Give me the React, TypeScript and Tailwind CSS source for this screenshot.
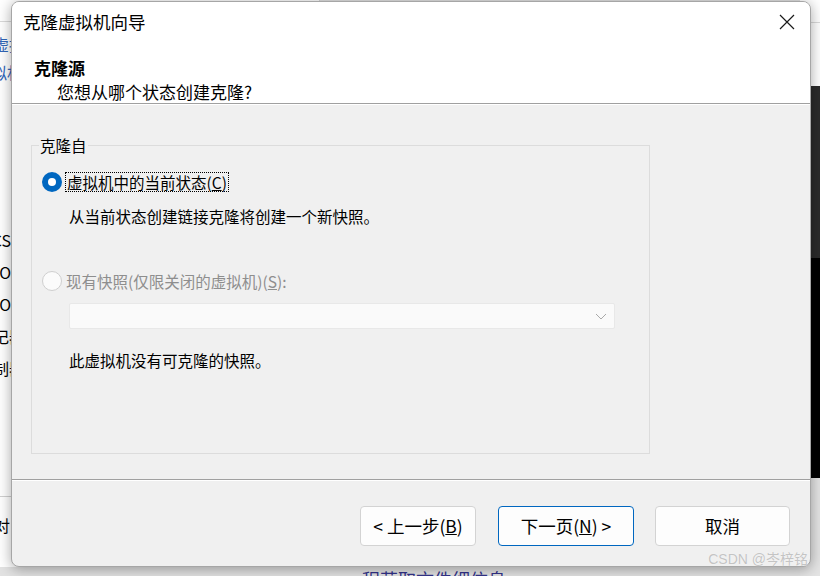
import React from 'react';

// Radio button in the Windows 11 style
function Radio({ checked, disabled }: { checked?: boolean; disabled?: boolean }) {
  if (checked) {
    return (
      <span className="w-[20px] h-[20px] rounded-full bg-[#0067c0] flex items-center justify-center shrink-0">
        <span className="w-[8px] h-[8px] rounded-full bg-white" />
      </span>
    );
  }
  return (
    <span
      className={`w-[20px] h-[20px] rounded-full border shrink-0 ${
        disabled ? 'border-[#cfcfcf] bg-[#fbfbfb]' : 'border-[#8a8a8a] bg-white'
      }`}
    />
  );
}

function DialogButton({ children, primary }: { children: React.ReactNode; primary?: boolean }) {
  return (
    <button
      className={`w-full h-[40px] rounded-[4px] bg-[#fdfdfd] text-[17.5px] leading-[22px] text-black flex items-center justify-center ${
        primary ? 'border border-[#0067c0]' : 'border border-[#d3d3d3]'
      }`}
    >
      {children}
    </button>
  );
}

export default function App() {
  return (
    <div className="relative w-[820px] h-[576px] overflow-hidden bg-[#e2e2e2] font-['Noto_Sans_CJK_SC',sans-serif]">
      {/* windows behind the dialog */}
      <div className="absolute left-0 top-0 w-[320px] h-[567px] bg-white border-r border-[#d6d6d6]">
        <div className="h-[22px] border-b border-[#dadada]" />
        <div className="ml-[-7px] mt-[12px] text-[16px] leading-[20px] text-[#3166b8]">虚拟</div>
        <div className="ml-[-9px] mt-[8px] text-[16px] leading-[20px] text-[#3166b8]">拟机</div>
        <div className="ml-[-39px] w-[50px] mt-[142px] flex flex-col items-end text-[16px] leading-[32px] text-black">
          <span>VCS</span>
          <span>IO</span>
          <span>IO</span>
          <span className="mr-[-14px]">登记器</span>
          <span className="mr-[-14px]">复制器</span>
        </div>
        <div className="mt-[112px] border-t border-[#d0d0d0]" />
        <div className="ml-[-6px] mt-[18px] text-[16px] leading-[20px] text-black">对</div>
      </div>
      <div className="absolute left-[362px] top-[568px] text-[18px] leading-[22px] text-[#33338a]">
        程获取文件细信息
      </div>
      <div className="absolute right-0 top-0 w-[20px] h-[576px] flex flex-col">
        <div className="h-[86px] bg-white border-t-[22px] border-white">
          <div className="border-t border-[#dadada]" />
        </div>
        <div className="h-[172px] bg-[#2b2b2b]" />
        <div className="h-[220px] bg-black" />
        <div className="flex-1 bg-[#e4e4e4]" />
      </div>

      {/* dialog window */}
      <div className="absolute left-[11px] top-[1px] w-[800px] h-[566px] flex flex-col rounded-[8px] border border-[#a6a6a6] overflow-hidden bg-[#f0f0f0] shadow-[0_2px_14px_rgba(0,0,0,0.35)]">
        {/* title bar */}
        <div className="h-[40px] bg-white flex items-center justify-between pl-[11px] pr-[15px]">
          <span className="text-[17.5px] leading-[22px] text-black">克隆虚拟机向导</span>
          <svg width="16" height="16" viewBox="0 0 16 16" className="text-[#1a1a1a]">
            <path d="M1 1 L15 15 M15 1 L1 15" stroke="currentColor" strokeWidth="1.2" fill="none" />
          </svg>
        </div>

        {/* header */}
        <div className="h-[61px] bg-white pl-[22px] pt-[15px]">
          <div className="text-[17px] leading-[22px] font-bold text-black">克隆源</div>
          <div className="ml-[23px] text-[17px] leading-[26px] text-black">您想从哪个状态创建克隆?</div>
        </div>
        <div className="border-t border-[#a0a0a0]" />
        <div className="border-t border-white" />

        {/* body */}
        <div className="flex-1 pl-[19px] pt-[30px]">
          <fieldset className="w-[619px] h-[319px] border border-[#dcdcdc]">
            <legend className="ml-[7px] px-[1px] text-[15.5px] leading-[20px] text-black">克隆自</legend>
            <div className="pl-[10px]">
              <div className="mt-[17px] h-[20px] flex items-center gap-[3px]">
                <Radio checked />
                <span className="border border-dotted border-black px-[1px] text-[15.5px] leading-[18px] text-black">
                  虚拟机中的当前状态(<span className="underline">C</span>)
                </span>
              </div>
              <div className="ml-[27px] mt-[14px] text-[15.5px] leading-[20px] text-black">
                从当前状态创建链接克隆将创建一个新快照。
              </div>
              <div className="mt-[45px] h-[20px] flex items-center gap-[4px]">
                <Radio disabled />
                <span className="text-[15.5px] leading-[20px] text-[#8e8e8e]">
                  现有快照(仅限关闭的虚拟机)(<span className="underline">S</span>):
                </span>
              </div>
              <div className="ml-[27px] mt-[12px] w-[546px] h-[26px] bg-[#fafafa] border border-[#e8e8e8] rounded-[2px] flex items-center justify-end pr-[7px]">
                <svg width="12" height="7" viewBox="0 0 12 7">
                  <path d="M1 1 L6 6 L11 1" stroke="#a9a9a9" strokeWidth="1" fill="none" />
                </svg>
              </div>
              <div className="ml-[27px] mt-[21px] text-[15.5px] leading-[20px] text-black">此虚拟机没有可克隆的快照。</div>
            </div>
          </fieldset>
        </div>

        <div className="border-t border-[#a0a0a0]" />
        <div className="border-t border-white" />

        {/* footer */}
        <div className="h-[85px] flex justify-end items-start pt-[25px] pr-[20px]">
          <div className="w-[116px]">
            <DialogButton>
              &lt;&nbsp;上一步(<span className="underline">B</span>)
            </DialogButton>
          </div>
          <div className="w-[136px] ml-[22px]">
            <DialogButton primary>
              下一页(<span className="underline">N</span>)&nbsp;&gt;
            </DialogButton>
          </div>
          <div className="w-[135px] ml-[21px]">
            <DialogButton>取消</DialogButton>
          </div>
        </div>
      </div>

      {/* watermark */}
      <div className="absolute right-[12px] bottom-[8px] text-[14px] leading-[18px] text-[#c4c4c4] font-['Liberation_Sans','Noto_Sans_CJK_SC',sans-serif] [text-shadow:0_0_1px_#ffffff]">
        CSDN @岑梓铭
      </div>
    </div>
  );
}
